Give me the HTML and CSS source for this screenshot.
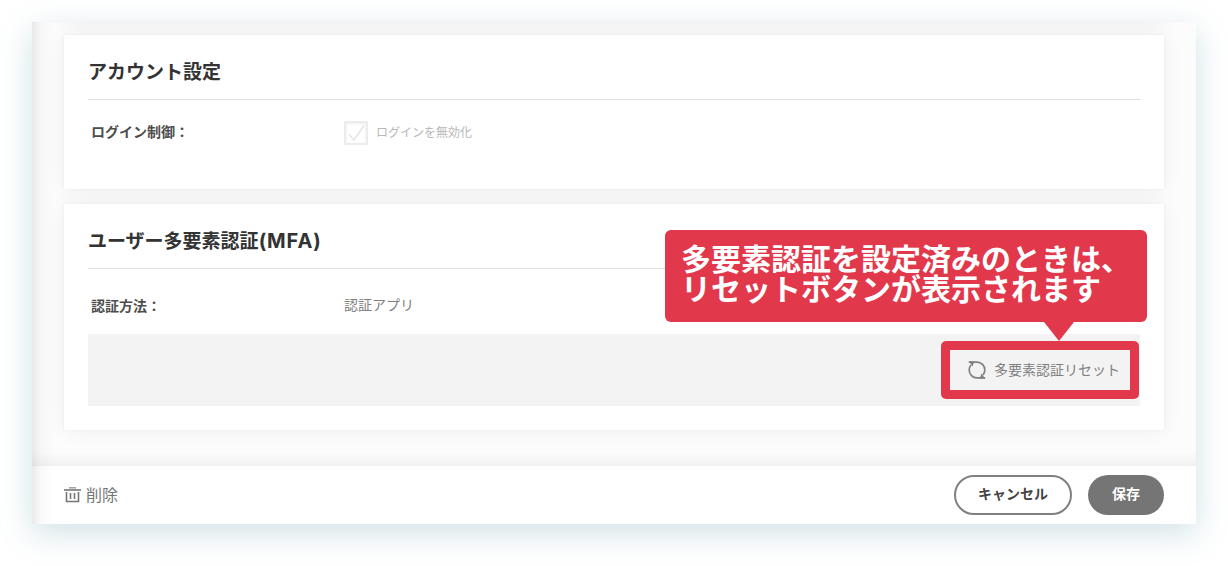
FILE: index.html
```html
<!DOCTYPE html>
<html lang="ja">
<head>
    <meta charset="UTF-8">
    <meta name="viewport" content="width=device-width, initial-scale=1.0">
    <title>アカウント設定</title>
    <link rel="stylesheet" href="styles.css">
</head>
<body>
    <div class="panel">
        <main class="content">
            <section class="card account-card">
                <h2>アカウント設定</h2>
                <div class="field">
                    <div class="field-label">ログイン制御：</div>
                    <label class="check-label">
                        <span class="checkbox">
                            <svg width="24" height="24" viewBox="0 0 24 24" fill="none" stroke="#e6e6e6" stroke-width="1.7">
                                <path d="M5 13.500l5 5.500L20 4.500"/>
                            </svg>
                        </span>
                        <span class="check-text">ログインを無効化</span>
                    </label>
                </div>
            </section>

            <section class="card mfa-card">
                <h2>ユーザー多要素認証<span class="latin">(MFA)</span></h2>
                <div class="field">
                    <div class="field-label">認証方法：</div>
                    <div class="field-value">認証アプリ</div>
                </div>
                <div class="action-bar">
                    <div class="highlight">
                        <button class="reset-button">
                            <svg width="18" height="18" viewBox="0 0 18 18" fill="none" stroke="#808080" stroke-width="1.7">
                                <path d="M.8 1.200H9C13.400 1.200 16.800 4.600 16.800 9c0 2-.6 3.600-1.800 5"/>
                                <path d="M17.200 16.800H9C4.600 16.800 1.200 13.400 1.200 9c0-2 .6-3.600 1.800-5"/>
                                <path d="M.8.600h5.400L4.600 5.600z" fill="#808080" stroke="none"/>
                                <path d="M17.200 17.400h-5.400l1.600-5z" fill="#808080" stroke="none"/>
                            </svg>
                            <span class="reset-text">多要素認証リセット</span>
                        </button>
                        <div class="callout">多要素認証を設定済みのときは、<br>リセットボタンが表示されます</div>
                    </div>
                </div>
            </section>
        </main>

        <footer class="footer">
            <button class="delete-button">
                <svg width="17" height="16" viewBox="0 0 17 16" fill="none" stroke="#757575" stroke-width="1.6">
                    <path d="M5 .8h7" stroke="#a5a5a5"/>
                    <path d="M0 3h17"/>
                    <path d="M2.500 5v9.500h12V5"/>
                    <path d="M6.500 6v6M10.500 6v6"/>
                </svg>
                <span class="delete-text">削除</span>
            </button>
            <div class="footer-buttons">
                <button class="pill cancel">キャンセル</button>
                <button class="pill save">保存</button>
            </div>
        </footer>
    </div>
</body>
</html>
```
FILE: styles.css
```css
* {
    box-sizing: border-box;
}

body {
    margin: 0;
    padding: 22px 32px 42px;
    background: #fff;
    color: #333;
    font-family: "Noto Sans CJK JP", sans-serif;
    font-size: 14px;
}

button {
    padding: 0;
    border: none;
    background: none;
    font-family: inherit;
    cursor: pointer;
}

.panel {
    position: relative;
    display: flex;
    flex-direction: column;
    height: 502px;
    background: #fcfcfc;
    box-shadow: 0 9px 30px rgba(90, 150, 170, 0.28);
}

/* shade cast by the side menu */
.panel::after {
    content: "";
    position: absolute;
    inset: 0 auto 0 0;
    width: 22px;
    background: linear-gradient(to right, rgba(0, 0, 0, 0.08), rgba(0, 0, 0, 0.025) 40%, rgba(0, 0, 0, 0));
}

.content {
    display: flex;
    flex-direction: column;
    gap: 15px;
    height: 444px;
    padding: 0 32px;
    overflow: hidden;
    background: linear-gradient(to top, #f1f1f1, rgba(252, 252, 252, 0) 14px);
}

/* bottom edge of the card scrolled out above */
.content::before {
    content: "";
    flex: none;
    height: 60px;
    margin-top: -62px;
    box-shadow: 0 0 20px rgba(0, 0, 0, 0.08);
}

.card {
    flex: none;
    padding: 0 24px;
    background: #fff;
    box-shadow: 0 0 20px rgba(0, 0, 0, 0.06), 0 0 3px rgba(0, 0, 0, 0.05);
}

.account-card {
    height: 154px;
}

.mfa-card {
    height: 226px;
}

h2 {
    height: 65px;
    margin: 0;
    padding-top: 22px;
    border-bottom: 1px solid #ddd;
    font-size: 19px;
    font-weight: 700;
    line-height: 28px;
}

.latin {
    font-family: Inter, sans-serif;
    font-size: 20px;
    letter-spacing: 0.9px;
}

.field {
    display: flex;
    align-items: center;
    height: 65px;
    padding-left: 3px;
}

.mfa-card .field {
    padding-top: 10px;
}

.field-label {
    width: 253px;
    padding-bottom: 3px;
    color: #4d4d4d;
    font-weight: 700;
}

.field-value {
    padding-bottom: 5px;
    color: #808080;
}

.check-label {
    display: flex;
    align-items: center;
    gap: 8px;
    color: #b8b8b8;
    font-size: 12px;
}

.check-text {
    padding-bottom: 3px;
}

.checkbox {
    width: 24px;
    height: 24px;
    border: 2px solid #ececec;
    box-shadow: inset 0 1px 3px #eee;
}

.checkbox svg {
    display: block;
    margin: -2px;
}

.action-bar {
    display: flex;
    justify-content: flex-end;
    align-items: center;
    height: 72px;
    padding-right: 1px;
    background: #f3f3f3;
}

.highlight {
    position: relative;
    width: 198px;
    height: 58px;
    border-radius: 5px;
    background: #e1384b;
    padding: 9px;
}

.reset-button {
    display: flex;
    align-items: center;
    gap: 8px;
    width: 180px;
    height: 40px;
    padding-left: 18px;
    background: #f3f3f3;
    color: #808080;
    font-size: 14px;
    white-space: nowrap;
}

.reset-text,
.delete-text {
    padding-bottom: 2px;
}

.callout {
    position: absolute;
    right: -8px;
    bottom: 77px;
    width: 482px;
    height: 92px;
    padding: 12px 16px;
    border-radius: 6px;
    background: #e1384b;
    color: #fff;
    font-size: 30px;
    font-weight: 700;
    line-height: 30px;
    white-space: nowrap;
}

.callout::after {
    content: "";
    position: absolute;
    top: 100%;
    right: 73px;
    border: 15px solid transparent;
    border-top: 19px solid #e1384b;
    border-bottom: 0;
}

.footer {
    display: flex;
    justify-content: space-between;
    align-items: center;
    height: 58px;
    padding: 0 32px;
    background: #fff;
}

.delete-button {
    display: flex;
    align-items: center;
    gap: 5px;
    color: #757575;
    font-size: 16px;
}

.footer-buttons {
    display: flex;
    gap: 16px;
}

.pill {
    height: 40px;
    padding-bottom: 4px;
    border-radius: 20px;
    font-size: 14px;
    font-weight: 700;
}

.cancel {
    width: 118px;
    border: 2px solid #808080;
    background: #fff;
    color: #444;
}

.save {
    width: 76px;
    background: #757575;
    color: #fff;
}
```
